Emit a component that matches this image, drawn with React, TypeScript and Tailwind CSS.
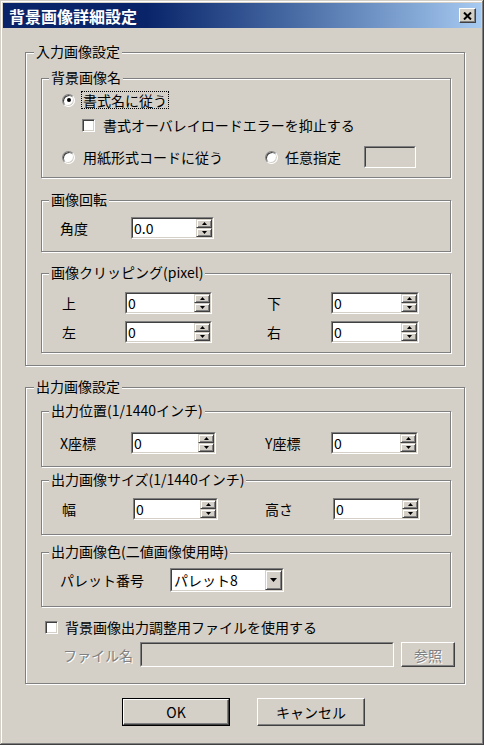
import type { ReactNode } from 'react';

function Group({ label, className, children }: { label: string; className: string; children?: ReactNode }) {
  return (
    <div className={`border border-[#808080] shadow-[inset_1px_1px_#fff,1px_1px_#fff] ${className}`}>
      <div className="-mt-[10px] ml-[8px] w-fit bg-[#d4d0c8] px-[2px] leading-[16px]">{label}</div>
      {children}
    </div>
  );
}

function SubGroup({ label, className, children }: { label: string; className: string; children?: ReactNode }) {
  return (
    <div className={`ml-[15px] w-[410px] border border-[#808080] shadow-[inset_1px_1px_#fff,1px_1px_#fff] ${className}`}>
      <div className="-mt-[10px] ml-[7px] w-fit bg-[#d4d0c8] px-[2px] leading-[16px]">{label}</div>
      {children}
    </div>
  );
}

function Sunken({ className, inner, children }: { className: string; inner: string; children?: ReactNode }) {
  return (
    <div className={`border border-t-[#808080] border-l-[#808080] border-b-white border-r-white ${className}`}>
      <div className={`flex h-full border border-t-[#404040] border-l-[#404040] border-b-[#d4d0c8] border-r-[#d4d0c8] ${inner}`}>
        {children}
      </div>
    </div>
  );
}

function Arrow({ up }: { up?: boolean }) {
  return (
    <div className="flex flex-1 items-center justify-center border border-t-[#d4d0c8] border-l-[#d4d0c8] border-b-[#404040] border-r-[#404040] bg-[#d4d0c8] shadow-[inset_1px_1px_#fff,inset_-1px_-1px_#808080]">
      <svg width="5" height="3" viewBox="0 0 5 3">
        {up ? <polygon points="2.5,0 5,3 0,3" fill="#000" /> : <polygon points="0,0 5,0 2.5,3" fill="#000" />}
      </svg>
    </div>
  );
}

function Spin({ value, className }: { value: string; className: string }) {
  return (
    <Sunken className={`h-[22px] ${className}`} inner="bg-white">
      <span className="flex-1 pl-[1px] text-[14px] leading-[18px]">{value}</span>
      <div className="flex w-[16px] flex-col">
        <Arrow up />
        <Arrow />
      </div>
    </Sunken>
  );
}

function Radio({ checked }: { checked?: boolean }) {
  return (
    <div className="flex h-[13px] w-[13px] shrink-0 items-center justify-center rounded-full border border-t-[#808080] border-l-[#808080] border-b-white border-r-white bg-white shadow-[inset_1px_1px_#404040,inset_-1px_-1px_#d4d0c8]">
      {checked && <div className="h-[4px] w-[4px] rounded-full bg-black" />}
    </div>
  );
}

function Check() {
  return (
    <div className="h-[13px] w-[13px] shrink-0 border border-t-[#808080] border-l-[#808080] border-b-white border-r-white bg-white shadow-[inset_1px_1px_#404040,inset_-1px_-1px_#d4d0c8]" />
  );
}

export default function App() {
  return (
    <div className="flex h-[745px] w-[484px] flex-col bg-[#d4d0c8] p-[3px] font-['Noto_Sans_CJK_JP','Liberation_Sans',sans-serif] text-[14px] leading-[16px] text-black shadow-[inset_-1px_-1px_#404040,inset_1px_1px_#d4d0c8,inset_-2px_-2px_#808080,inset_2px_2px_#fff]">
      {/* title bar */}
      <div className="flex h-[25px] shrink-0 items-center justify-between bg-linear-to-r from-[#0a246a] from-30% to-[#a6caf0] pl-[6px] pr-[5px]">
        <span className="text-[16px] font-bold leading-[20px] text-white">背景画像詳細設定</span>
        <div className="flex h-[15px] w-[17px] items-center justify-center border border-t-white border-l-white border-b-[#404040] border-r-[#404040] bg-[#d4d0c8] shadow-[inset_-1px_-1px_#808080]">
          <svg width="9" height="8" viewBox="0 0 9 8">
            <path d="M1 0.5 L8 7.5 M8 0.5 L1 7.5" stroke="#000" strokeWidth="2" />
          </svg>
        </div>
      </div>

      <div className="pl-[22px]">
        {/* 入力画像設定 */}
        <Group label="入力画像設定" className="mt-[24px] h-[314px] w-[440px]">
          <SubGroup label="背景画像名" className="mt-[19px] h-[100px]">
            <div className="mt-[6px] flex h-[18px] items-center pl-[20px]">
              <Radio checked />
              <span className="ml-[6px] border border-dotted border-black px-[1px] leading-[16px]">書式名に従う</span>
            </div>
            <div className="mt-[7px] flex h-[18px] items-center pl-[40px]">
              <Check />
              <span className="ml-[8px]">書式オーバレイロードエラーを抑止する</span>
            </div>
            <div className="mt-[12px] flex h-[22px] items-center pl-[20px]">
              <div className="flex w-[203px] items-center">
                <Radio />
                <span className="ml-[8px]">用紙形式コードに従う</span>
              </div>
              <Radio />
              <span className="ml-[7px] w-[56px]">任意指定</span>
              <Sunken className="ml-[23px] h-[22px] w-[52px]" inner="bg-[#d4d0c8]" />
            </div>
          </SubGroup>

          <SubGroup label="画像回転" className="mt-[22px] h-[52px]">
            <div className="mt-[10px] flex h-[22px] items-center pl-[18px]">
              <span className="w-[71px]">角度</span>
              <Spin value="0.0" className="w-[83px]" />
            </div>
          </SubGroup>

          <SubGroup label="画像クリッピング(pixel)" className="mt-[21px] h-[80px]">
            <div className="mt-[12px] flex h-[22px] items-center pl-[20px]">
              <span className="w-[63px]">上</span>
              <Spin value="0" className="w-[87px]" />
              <span className="ml-[55px] w-[64px]">下</span>
              <Spin value="0" className="w-[88px]" />
            </div>
            <div className="mt-[7px] flex h-[22px] items-center pl-[20px]">
              <span className="w-[63px]">左</span>
              <Spin value="0" className="w-[87px]" />
              <span className="ml-[55px] w-[64px]">右</span>
              <Spin value="0" className="w-[88px]" />
            </div>
          </SubGroup>
        </Group>

        {/* 出力画像設定 */}
        <Group label="出力画像設定" className="mt-[21px] h-[297px] w-[440px]">
          <SubGroup label="出力位置(1/1440インチ)" className="mt-[17px] h-[56px]">
            <div className="mt-[14px] flex h-[22px] items-center pl-[18px]">
              <span className="w-[71px]">X座標</span>
              <Spin value="0" className="w-[85px]" />
              <span className="ml-[49px] w-[66px]">Y座標</span>
              <Spin value="0" className="w-[87px]" />
            </div>
          </SubGroup>

          <SubGroup label="出力画像サイズ(1/1440インチ)" className="mt-[13px] h-[55px]">
            <div className="mt-[11px] flex h-[22px] items-center pl-[20px]">
              <span className="w-[71px]">幅</span>
              <Spin value="0" className="w-[85px]" />
              <span className="ml-[47px] w-[68px]">高さ</span>
              <Spin value="0" className="w-[87px]" />
            </div>
          </SubGroup>

          <SubGroup label="出力画像色(二値画像使用時)" className="mt-[17px] h-[55px]">
            <div className="mt-[9px] flex h-[24px] items-center pl-[18px]">
              <span className="w-[110px]">パレット番号</span>
              <Sunken className="h-[24px] w-[114px]" inner="bg-white">
                <span className="flex-1 pl-[2px] leading-[20px]">パレット8</span>
                <div className="flex w-[17px] items-center justify-center border border-t-[#d4d0c8] border-l-[#d4d0c8] border-b-[#404040] border-r-[#404040] bg-[#d4d0c8] shadow-[inset_1px_1px_#fff,inset_-1px_-1px_#808080]">
                  <svg width="7" height="4" viewBox="0 0 7 4">
                    <polygon points="0,0 7,0 3.5,4" fill="#000" />
                  </svg>
                </div>
              </Sunken>
            </div>
          </SubGroup>

          <div className="mt-[11px] flex h-[18px] items-center pl-[19px]">
            <Check />
            <span className="ml-[7px]">背景画像出力調整用ファイルを使用する</span>
          </div>

          <div className="mt-[6px] flex h-[25px] items-center pl-[37px]">
            <span className="w-[77px] text-[#808080] [text-shadow:1px_1px_0_#fff]">ファイル名</span>
            <Sunken className="h-[25px] w-[254px]" inner="bg-[#d4d0c8]" />
            <div className="ml-[7px] flex h-[25px] w-[54px] items-center justify-center border border-t-white border-l-white border-b-[#404040] border-r-[#404040] shadow-[inset_-1px_-1px_#808080] text-[#808080] [text-shadow:1px_1px_0_#fff]">
              参照
            </div>
          </div>
        </Group>
      </div>

      {/* buttons */}
      <div className="mt-[14px] flex justify-center gap-[27px] pl-[3px]">
        <div className="h-[28px] w-[108px] border border-black">
          <div className="flex h-full items-center justify-center border border-t-white border-l-white border-b-[#404040] border-r-[#404040] shadow-[inset_-1px_-1px_#808080]">
            OK
          </div>
        </div>
        <div className="flex h-[28px] w-[108px] items-center justify-center border border-t-white border-l-white border-b-[#404040] border-r-[#404040] shadow-[inset_-1px_-1px_#808080]">
          キャンセル
        </div>
      </div>
    </div>
  );
}
